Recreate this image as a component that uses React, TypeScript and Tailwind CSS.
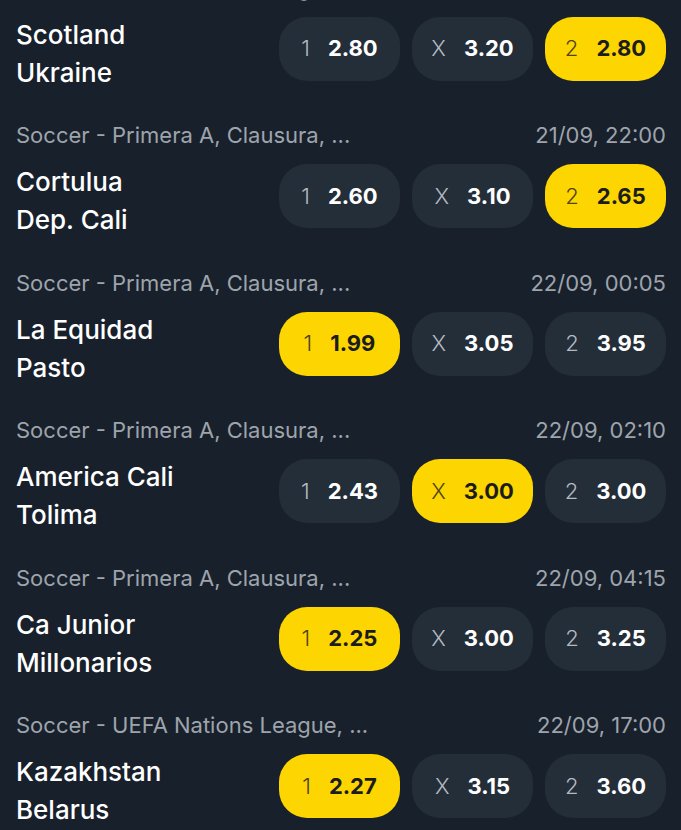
import React from "react";

type Pick = "1" | "X" | "2";

const matches: {
  league: string;
  time: string;
  home: string;
  away: string;
  odds: [string, string, string];
  picked: Pick;
}[] = [
  { league: "Soccer - UEFA Nations League, ...", time: "21/09, 20:45", home: "Scotland", away: "Ukraine", odds: ["2.80", "3.20", "2.80"], picked: "2" },
  { league: "Soccer - Primera A, Clausura, ...", time: "21/09, 22:00", home: "Cortulua", away: "Dep. Cali", odds: ["2.60", "3.10", "2.65"], picked: "2" },
  { league: "Soccer - Primera A, Clausura, ...", time: "22/09, 00:05", home: "La Equidad", away: "Pasto", odds: ["1.99", "3.05", "3.95"], picked: "1" },
  { league: "Soccer - Primera A, Clausura, ...", time: "22/09, 02:10", home: "America Cali", away: "Tolima", odds: ["2.43", "3.00", "3.00"], picked: "X" },
  { league: "Soccer - Primera A, Clausura, ...", time: "22/09, 04:15", home: "Ca Junior", away: "Millonarios", odds: ["2.25", "3.00", "3.25"], picked: "1" },
  { league: "Soccer - UEFA Nations League, ...", time: "22/09, 17:00", home: "Kazakhstan", away: "Belarus", odds: ["2.27", "3.15", "3.60"], picked: "1" },
];

const labels: Pick[] = ["1", "X", "2"];

function OddButton({ label, value, active }: { label: string; value: string; active: boolean }) {
  return (
    <div
      className={`flex h-16 w-[121px] items-center justify-center gap-[18px] rounded-[28px] ${
        active ? "bg-[#fdd500]" : "bg-[#242e39]"
      }`}
    >
      <span className={`text-[22px] font-light ${active ? "text-[#4d4418]" : "text-[#b4bac1]"}`}>{label}</span>
      <span className={`text-[22px] font-bold ${active ? "text-[#1b1c1d]" : "text-white"}`}>{value}</span>
    </div>
  );
}

export default function App() {
  return (
    <div className="h-[830px] w-[681px] overflow-hidden bg-[#18202b] font-['Inter',sans-serif]">
      <div className="mt-[-24.5px] px-4 pr-[15px]">
        {matches.map((m, i) => (
          <div key={i} className="pb-[42.5px]">
            <div className="flex h-6 items-center justify-between text-[22px] leading-6 text-[#9ea4ac]">
              <span>{m.league}</span>
              <span>{m.time}</span>
            </div>
            <div className="mt-[17px] flex h-16 items-center justify-between">
              <div className="mt-[10px] text-[26px] font-medium leading-[38px] text-white">
                <div>{m.home}</div>
                <div>{m.away}</div>
              </div>
              <div className="flex gap-3">
                {labels.map((l, j) => (
                  <OddButton key={l} label={l} value={m.odds[j]} active={m.picked === l} />
                ))}
              </div>
            </div>
          </div>
        ))}
      </div>
    </div>
  );
}
